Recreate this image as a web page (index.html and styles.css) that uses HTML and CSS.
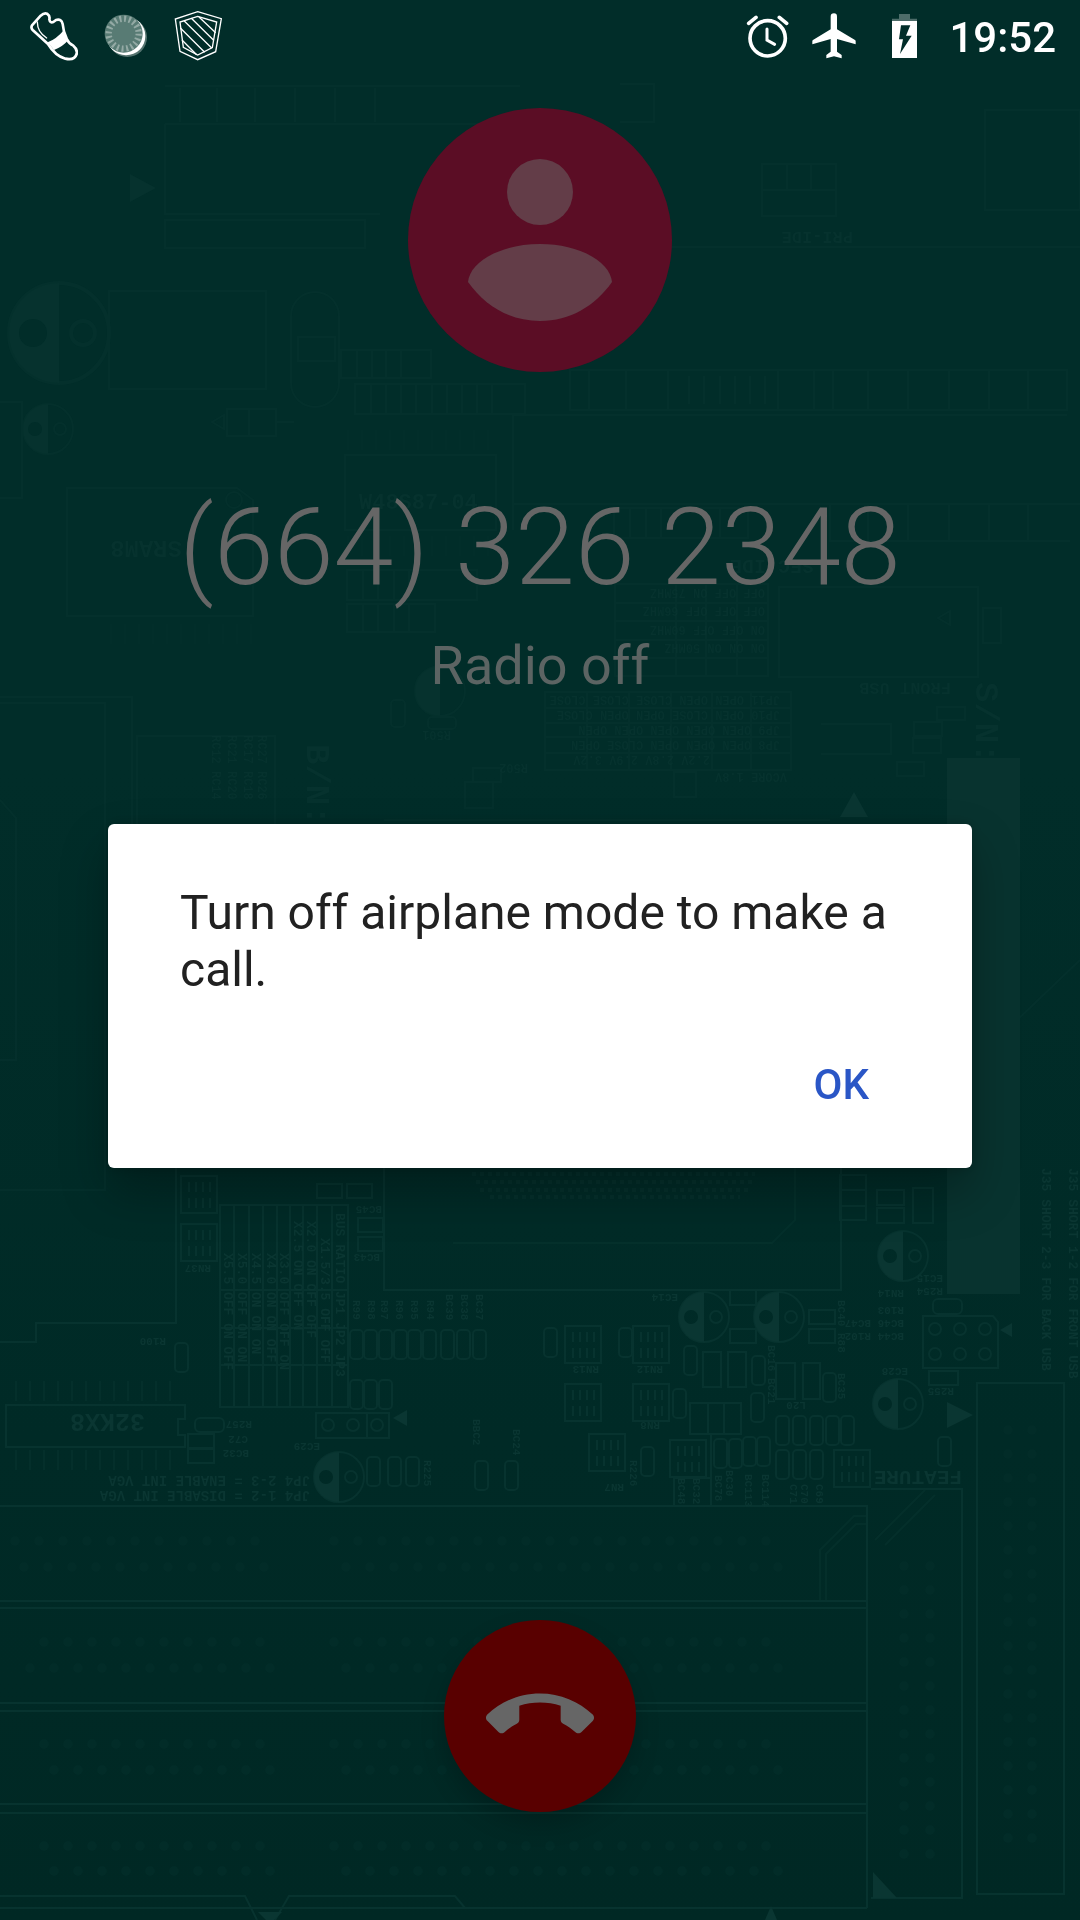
FILE: index.html
```html
<!DOCTYPE html>
<html lang="en">
<head>
<meta charset="utf-8">
<meta name="viewport" content="width=device-width, initial-scale=1">
<title>Call</title>
<link rel="stylesheet" href="styles.css">
</head>
<body>
<svg class="board" viewBox="0 0 1080 1920" preserveAspectRatio="xMidYMid slice" aria-hidden="true">
  <defs>
    <g id="cap">
      <circle r="25"/>
      <path class="solid" d="M0-25A25 25 0 0 0 0 25ZM-20 0a7 7 0 1 1 14 0a7 7 0 1 1-14 0Z" fill-rule="evenodd"/>
      <circle cx="12" r="6"/>
    </g>
    <g id="chip"><rect width="36" height="37"/><path d="M8 6v10M15 6v10M22 6v10M29 6v10M8 22v10M15 22v10M22 22v10M29 22v10"/></g>
    <rect id="res" width="13" height="29" rx="4"/>
  </defs>

  <g class="trace faint">
    <path d="M165 86H520M165 124H540M180 88v34M217 88v34M255 88v34M295 88v34M335 88v34M375 88v34M165 124v90H380"/>
    <path class="solid" d="M130 174v28l26-14z"/>
    <path d="M165 220H365v28H165zM620 84h34v38h-34M762 164h74v52h-74zM787 164v26M811 164v26M762 190h74M985 110h95v100h-95zM670 247H1080"/>
    <use href="#cap" transform="translate(59 333) scale(2)"/>
    <use href="#cap" x="48" y="429"/>
    <path d="M109 291H266V389H109zM227 409h49v27h-49zM249 409v27M276 422h18M212 422l12-7v14z"/>
    <rect x="291" y="292" width="48" height="115" rx="24"/><path d="M298 337h37v24h-37z"/>
    <path d="M341 350h90v28h-90zM357 350v28M372 350v28M386 350v28M401 350v28M355 384h170v30H355zM371 384v30M386 384v30M401 384v30M416 384v30M432 384v30M447 384v30M462 384v30M477 384v30M492 384v30"/>
    <path d="M0 402h22v96H0M67 488h170l16 12v116H67zM345 455h151v75H345z"/>
    <path class="pins" d="M347 440h150M347 546h150M110 634h145"/>
    <circle cx="234" cy="500" r="8"/>
    <path d="M513 415v115M513 504H1080M570 370h497v40H570zM589 371v38M626 371v38M668 371v38M689 376v28M704 376v28M720 376v28M735 376v28M750 376v28M765 376v28M778 371v38M814 371v38M833 371v38M868 371v38M908 371v38M949 371v38M989 371v38M1028 371v38M513 415H1067"/>
    <path d="M614 508h134v30H614zM630 508v30M646 508v30M661 508v30M720 508v30M830 504v37H1070M868 504v37M908 504v37M949 504v37M989 504v37M1028 504v37"/>
    <path d="M347 570h130v30H347zM363 570v30M378 570v30M394 570v30M409 570v30M347 604h88v28h-88zM363 604v28M378 604v28M394 604v28M409 604v28"/>
    <path d="M615 584h153v92H615zM615 603h153M615 621h153M615 640h153M615 658h153M676 584v92M706 584v92M737 584v92M779 587h199v90H779zM938 618l12-7v14zM983 608h18v35h-18z"/>
    <circle cx="440" cy="691" r="25"/><path class="solid" d="M440 666a25 25 0 0 0 0 50z"/><rect x="391" y="700" width="14" height="27" rx="4"/><rect x="428" y="717" width="28" height="12" rx="4"/>
    <path d="M545 692h206v78H545zM545 708h246M545 723h246M545 737h246M545 753h246M587 692v78M629 692v78M671 692v78M712 692v78M748 692h43v78h-43M821 724h70v30h-70"/>
    <path d="M937 707h28v13h-28zM914 722h28v14h-28zM913 738h28v15h-28zM897 762h27v14h-27zM674 772h22v25h-22zM473 768h28v14h-28zM465 782h28v26h-28z"/>
    <path d="M0 697H132V824M0 703H105V1190H0M0 800l16 18V1060H0M137 824V736H275V824M384 820H830M965 1070l115-110"/>
  </g>
  <g class="print faint">
    <text transform="translate(182 541) rotate(180)" font-size="24">SRAM8</text>
    <text x="359" y="509" font-size="22">W48S87-04</text>
    <text transform="translate(853 232) rotate(180)" font-size="17">PRI-IDE</text>
    <text transform="translate(814 560) rotate(180)" font-size="20">SEC-IDE</text>
    <text transform="translate(951 683) rotate(180)" font-size="17">FRONT USB</text>
    <g font-size="12">
      <text transform="translate(765 589) rotate(180)">OFF OFF ON  75MHZ</text>
      <text transform="translate(765 607) rotate(180)">OFF OFF OFF 66MHZ</text>
      <text transform="translate(765 626) rotate(180)">ON  OFF OFF 60MHZ</text>
      <text transform="translate(765 644) rotate(180)">ON  ON  ON  50MHZ</text>
      <text transform="translate(780 696) rotate(180)">JP11 OPEN OPEN CLOSE CLOSE CLOSE</text>
      <text transform="translate(780 711) rotate(180)">JP10 OPEN CLOSE OPEN OPEN CLOSE</text>
      <text transform="translate(780 726) rotate(180)">JP9  OPEN OPEN OPEN OPEN OPEN</text>
      <text transform="translate(780 741) rotate(180)">JP8  OPEN OPEN OPEN CLOSE OPEN</text>
      <text transform="translate(710 756) rotate(180)">2.2V  2.8V  2.9V  3.2V</text>
      <text transform="translate(787 773) rotate(180)">VCORE 1.8V</text>
      <text transform="translate(212 735) rotate(90)">RC12 RC14</text>
      <text transform="translate(228 735) rotate(90)">RC21 RC20</text>
      <text transform="translate(244 735) rotate(90)">RC17 RC18</text>
      <text transform="translate(258 735) rotate(90)">RC27 RC26</text>
      <text transform="translate(528 764) rotate(180)">R502</text>
      <text transform="translate(451 731) rotate(180)">R501</text>
    </g>
    <text transform="translate(307 744) rotate(90)" font-size="34">B/N:</text>
    <text transform="translate(976 682) rotate(90)" font-size="34">S/N:</text>
  </g>
  <path class="slot" d="M947 758h73v536h-73z"/>
  <path class="solid" d="M840 817l14-25 14 25z"/>

  <g class="trace">
    <path d="M0 1342H36V1323H176V1160M384 1160V1290H841V1160"/>
    <path class="dots" d="M472 1174H755M476 1182H752M480 1190H748M490 1197H740"/>
    <path class="faint" d="M453 1243H772L795 1220V1160"/>
    <use href="#chip" x="181" y="1176"/><use href="#chip" x="181" y="1224"/>
    <path d="M220 1205H348V1407H220zM234 1205v202M249 1205v202M263 1205v202M277 1205v202M290 1205v202M303 1205v202M317 1205v202M332 1205v202M220 1290H348M220 1328H348M220 1365H348"/>
    <path d="M317 1184h25v14h-25zM347 1184h25v14h-25zM358 1218h25v14h-25zM358 1237h25v14h-25z"/>
    <use href="#res" x="350" y="1330"/><use href="#res" x="364" y="1330"/><use href="#res" x="379" y="1330"/><use href="#res" x="394" y="1330"/><use href="#res" x="408" y="1330"/><use href="#res" x="423" y="1330"/><use href="#res" x="441" y="1330"/><use href="#res" x="457" y="1330"/><use href="#res" x="473" y="1330"/>
    <use href="#res" x="350" y="1380"/><use href="#res" x="364" y="1380"/><use href="#res" x="379" y="1380"/>
    <use href="#res" x="175" y="1343"/><use href="#res" x="367" y="1457"/><use href="#res" x="388" y="1457"/><use href="#res" x="406" y="1457"/><use href="#res" x="475" y="1461"/><use href="#res" x="505" y="1461"/>
    <path d="M6 1405H185V1419H178V1435H185V1447H6Z"/>
    <path class="pins" d="M15 1391H180M15 1460H180"/>
    <rect x="195" y="1418" width="29" height="14" rx="5"/><path d="M188 1434h26v14h-26zM188 1449h26v14h-26z"/>
    <path d="M316 1413h73v25h-73zM367 1413v25"/><circle cx="328" cy="1425" r="6"/><circle cx="353" cy="1425" r="6"/><circle cx="377" cy="1425" r="6"/>
    <use href="#cap" x="339" y="1477"/><use href="#cap" x="704" y="1317"/><use href="#cap" x="779" y="1317"/><use href="#cap" x="903" y="1256"/><use href="#cap" x="898" y="1404"/>
    <use href="#chip" x="565" y="1326"/><use href="#chip" x="633" y="1326"/><use href="#chip" x="565" y="1384"/><use href="#chip" x="633" y="1384"/><use href="#chip" x="589" y="1434"/><use href="#chip" x="670" y="1440"/><use href="#chip" x="834" y="1450"/>
    <use href="#res" x="544" y="1328"/><use href="#res" x="619" y="1328"/><use href="#res" x="684" y="1346"/><use href="#res" x="673" y="1389"/><use href="#res" x="641" y="1447"/><use href="#res" x="752" y="1356"/><use href="#res" x="751" y="1393"/><use href="#res" x="823" y="1373"/><use href="#res" x="938" y="1437"/>
    <path d="M703 1352h18v35h-18zM728 1352h18v35h-18zM776 1363h19v36h-19zM803 1363h17v36h-17zM690 1403h51v31h-51zM708 1403v31M724 1403v31M730 1290h26v15h-26zM730 1329h26v14h-26zM809 1310h26v14h-26zM809 1329h26v14h-26z"/>
    <use href="#res" x="776" y="1416"/><use href="#res" x="793" y="1416"/><use href="#res" x="810" y="1416"/><use href="#res" x="826" y="1416"/><use href="#res" x="841" y="1416"/>
    <use href="#res" x="776" y="1450"/><use href="#res" x="793" y="1450"/><use href="#res" x="810" y="1450"/><use href="#res" x="714" y="1439"/><use href="#res" x="729" y="1439"/><use href="#res" x="743" y="1437"/><use href="#res" x="757" y="1437"/>
    <path d="M674 1478h37v28h-37zM711 1434v72M840 1175h26v15h-26zM840 1190h26v16h-26zM840 1206h26v14h-26zM877 1190h27v15h-27zM877 1208h27v15h-27zM913 1188h20v35h-20z"/>
    <path d="M923 1316h70l5 6v46h-75z"/><circle cx="935" cy="1329" r="6"/><circle cx="960" cy="1329" r="6"/><circle cx="985" cy="1329" r="6"/><circle cx="935" cy="1354" r="6"/><circle cx="960" cy="1354" r="6"/><circle cx="985" cy="1354" r="6"/>
    <rect x="933" y="1299" width="29" height="15" rx="5"/><path d="M929 1371h29v14h-29zM977 1383h87v511h-87z"/>
    <path d="M0 1506H867V1908M0 1601H867M0 1608H867M0 1703H867M0 1711H867M0 1804H867M0 1813H867M0 1908H867M871 1489h91v409h-91M0 1896H245l12 24M275 1920l14-24H455l10 12"/>
    <path class="faint" d="M820 1600v-50l34-34h12M826 1600v-46l30-30h10M875 1540l50-50M885 1545l50-50"/>
  </g>
  <path class="solid" d="M393 1418l14-8v16zM1000 1330l12-7v14zM947 1402v26l26-13zM873 1872v26h24zM765 1920l6-14 6 14zM258 1912l8 8h8l8-8z"/>
  <path class="pads" d="M15 1541H265M334 1541H770M24 1567H282M346 1567H780M44 1642H265M334 1642H770M30 1668H282M346 1668H780M44 1744H265M334 1744H770M54 1770H282M346 1770H780M44 1846H265M334 1846H770M54 1871H282M346 1871H780M904 1566V1860M930 1566V1860M1008 1430V1860M1032 1430V1860"/>
  <g class="print">
    <text transform="translate(145 1414) rotate(180)" font-size="25">32KX8</text>
    <text transform="translate(310 1476) rotate(180)" font-size="14">JP4 2-3 = ENABLE INT VGA</text>
    <text transform="translate(310 1491) rotate(180)" font-size="14">JP4 1-2 = DISABLE INT VGA</text>
    <text transform="translate(962 1471) rotate(180)" font-size="21">FEATURE</text>
    <text transform="translate(1069 1168) rotate(90)" font-size="13">J35 SHORT 1-2 FOR FRONT USB</text>
    <text transform="translate(1042 1168) rotate(90)" font-size="13">J35 SHORT 2-3 FOR BACK USB</text>
    <g font-size="13">
      <text transform="translate(336 1213) rotate(90)">BUS RATIO JP1    JP2   JP3</text>
      <text transform="translate(321 1238) rotate(90)">X1.5/3.5 OFF   OFF</text>
      <text transform="translate(307 1221) rotate(90)">X2.0     ON    OFF   OFF</text>
      <text transform="translate(294 1221) rotate(90)">X2.5     ON    OFF   ON</text>
      <text transform="translate(280 1253) rotate(90)">X3.0 OFF   OFF   ON</text>
      <text transform="translate(267 1253) rotate(90)">X4.0 ON    ON    OFF</text>
      <text transform="translate(252 1253) rotate(90)">X4.5 ON    ON    ON</text>
      <text transform="translate(238 1253) rotate(90)">X5.0 OFF   ON    ON</text>
      <text transform="translate(224 1253) rotate(90)">X5.5 OFF   ON    OFF</text>
    </g>
    <g font-size="11">
      <text transform="translate(211 1265) rotate(180)">RN37</text><text transform="translate(166 1338) rotate(180)">R100</text><text transform="translate(252 1421) rotate(180)">R257</text><text transform="translate(248 1436) rotate(180)">C72</text><text transform="translate(249 1450) rotate(180)">BC32</text><text transform="translate(320 1443) rotate(180)">EC29</text><text transform="translate(380 1254) rotate(180)">BC43</text><text transform="translate(382 1206) rotate(180)">BC45</text>
      <text transform="translate(353 1300) rotate(90)">R99</text><text transform="translate(368 1300) rotate(90)">R98</text><text transform="translate(381 1300) rotate(90)">R97</text><text transform="translate(396 1300) rotate(90)">R96</text><text transform="translate(411 1300) rotate(90)">R95</text><text transform="translate(427 1300) rotate(90)">R94</text><text transform="translate(446 1294) rotate(90)">BC39</text><text transform="translate(461 1294) rotate(90)">BC38</text><text transform="translate(476 1294) rotate(90)">BC37</text>
      <text transform="translate(473 1419) rotate(90)">BBC2</text><text transform="translate(513 1429) rotate(90)">BC24</text><text transform="translate(424 1460) rotate(90)">R225</text>
      <text transform="translate(678 1294) rotate(180)">EC14</text><text transform="translate(599 1366) rotate(180)">RN13</text><text transform="translate(663 1366) rotate(180)">RN12</text><text transform="translate(660 1422) rotate(180)">RN8</text><text transform="translate(624 1484) rotate(180)">RN7</text><text transform="translate(630 1460) rotate(90)">R226</text>
      <text transform="translate(904 1290) rotate(180)">RN14</text><text transform="translate(904 1307) rotate(180)">R103</text><text transform="translate(904 1320) rotate(180)">BC46 BC47</text><text transform="translate(904 1333) rotate(180)">BC44 R102</text><text transform="translate(943 1275) rotate(180)">EC15</text><text transform="translate(943 1288) rotate(180)">R254</text><text transform="translate(908 1368) rotate(180)">EC28</text><text transform="translate(954 1388) rotate(180)">R255</text><text transform="translate(806 1402) rotate(180)">L20</text>
      <text transform="translate(678 1478) rotate(90)">BC48</text><text transform="translate(693 1478) rotate(90)">BC32</text><text transform="translate(715 1475) rotate(90)">BC78</text><text transform="translate(726 1470) rotate(90)">BC30</text><text transform="translate(745 1474) rotate(90)">BC113</text><text transform="translate(762 1474) rotate(90)">BC114</text><text transform="translate(790 1484) rotate(90)">C71</text><text transform="translate(801 1484) rotate(90)">C70</text><text transform="translate(816 1484) rotate(90)">C69</text><text transform="translate(838 1300) rotate(90)">BC40 R88</text><text transform="translate(838 1373) rotate(90)">BC35</text><text transform="translate(768 1345) rotate(90)">BC16 BC21</text>
    </g>
  </g>
</svg>

<div class="screen">
  <header class="status-bar">
    <div class="notifications">
      <svg class="notice" viewBox="90 0 144 216" role="img" aria-label="Step counter">
        <g fill="none" stroke="#fff" stroke-width="8" stroke-linejoin="round" stroke-linecap="round">
          <path d="M96 76L122 47Q132 38 141 41Q151 48 148 58Q150 70 160 66L168 60Q184 55 188 72Q190 96 200 116Q206 130 220 137Q233 148 230 162Q224 182 196 176Q166 168 144 132L98 90Q92 84 96 76Z"/>
          <path d="M112 66Q112 96 140 114" stroke-width="4"/>
        </g>
        <path d="M143 127Q170 116 190 92L203 122Q190 138 162 150Z" fill="#fff"/>
      </svg>
      <svg class="notice" viewBox="306 0 144 216" role="img" aria-label="Sync">
        <circle cx="382" cy="112" r="59" fill="#a9b9b5" opacity=".5"/>
        <circle cx="378" cy="108" r="58" fill="#fff"/>
        <circle cx="371" cy="101" r="57" fill="#587b74"/>
        <circle cx="371" cy="101" r="45" fill="none" stroke="#94aaa5" stroke-width="19" stroke-dasharray="6 8.137"/>
      </svg>
      <svg class="notice" viewBox="522 0 144 216" role="img" aria-label="Firewall">
        <g fill="none" stroke="#fff" stroke-width="4">
          <path d="M593 35L664 56L647 155L593 179L540 154L526 57Z"/>
          <path d="M593 49L650 66L637 143L593 165L550 142L540 66Z"/>
          <path d="M541 84L614 157M546 120L590 164M552 62L635 144M574 55L641 121M597 51L647 98"/>
        </g>
      </svg>
    </div>
    <div class="system">
      <svg class="indicator" viewBox="75 0 132 216" role="img" aria-label="Alarm set">
        <g fill="none" stroke="#fff" stroke-linecap="round">
          <circle cx="143" cy="115" r="53" stroke-width="11"/>
          <path d="M86 70L108 52M200 70L178 52" stroke-width="11"/>
          <path d="M141 87V120L164 133" stroke-width="9"/>
        </g>
      </svg>
      <svg class="indicator" viewBox="279 0 132 216" role="img" aria-label="Airplane mode">
        <path d="M342 40Q351 40 351 50V88L405 120Q407 121 407 124V133L351 117V155L365 165V175L342 169L319 175V165L332 155V117L277 133V124Q277 121 279 120L332 88V50Q332 40 342 40Z" fill="#fff"/>
      </svg>
      <svg class="indicator" viewBox="483 0 132 216" role="img" aria-label="Battery charging">
        <path d="M537 42h33v14h21v7h-75v-7h21z" fill="#4d6c69"/>
        <path d="M516 63H591V174H516ZM543 76L537 118H549L540 162L575 107H558L571 76Z" fill="#fff" fill-rule="evenodd"/>
      </svg>
      <time class="clock">19:52</time>
    </div>
  </header>

  <main class="call">
    <svg class="avatar" viewBox="0 0 264 264" role="img" aria-label="Contact">
      <circle cx="132" cy="132" r="132" fill="#5b0d25"/>
      <circle cx="132" cy="84" r="33" fill="#633d48"/>
      <path d="M60 174C62 153 94 136 132 136S202 153 204 174C187 198 162 213 132 213S77 198 60 174Z" fill="#633d48"/>
    </svg>
    <h1 class="number">(664) 326 2348</h1>
    <p class="state">Radio off</p>
    <button class="hang-up" type="button" aria-label="End call">
      <svg class="hang-up-icon" viewBox="0 0 24 24" aria-hidden="true"><path fill="#666" d="M12 9c-1.6 0-3.15.25-4.6.72v3.1c0 .39-.23.74-.56.9-.98.49-1.87 1.12-2.66 1.85-.18.18-.43.28-.7.28-.28 0-.53-.11-.71-.29L.29 13.08c-.18-.17-.29-.42-.29-.7 0-.28.11-.53.29-.71C3.34 8.78 7.46 7 12 7s8.66 1.78 11.71 4.67c.18.18.29.43.29.71 0 .28-.11.53-.29.71l-2.48 2.48c-.18.18-.43.29-.71.29-.27 0-.52-.11-.7-.28-.79-.74-1.69-1.36-2.67-1.85-.33-.16-.56-.5-.56-.9v-3.1C15.15 9.25 13.6 9 12 9z"/></svg>
    </button>
  </main>

  <div class="overlay">
    <section class="dialog" role="alertdialog" aria-modal="true" aria-describedby="message">
      <p class="message" id="message">Turn off airplane mode to make a call.</p>
      <button class="confirm" type="button">OK</button>
    </section>
  </div>
</div>
</body>
</html>
```
FILE: styles.css
```css
* {
  box-sizing: border-box;
}

body {
  margin: 0;
  background: #002c28;
  font-family: Roboto, "Liberation Sans", sans-serif;
}

button {
  border: 0;
  font: inherit;
  cursor: pointer;
}

/* Circuit board wallpaper */
.board {
  position: absolute;
  inset: 0;
  width: 100%;
  height: 100%;
  background: linear-gradient(#012d29, #012d29 40%, #002a26 75%, #002824);
}

.trace {
  fill: none;
  stroke: #07332f;
  stroke-width: 2;
}

.faint {
  opacity: .6;
}

.solid {
  fill: #0a3632;
  stroke: none;
}

.slot {
  fill: #08332f;
}

.print {
  fill: #0a3632;
  font-family: "Liberation Mono", monospace;
  font-weight: 700;
  white-space: pre;
}

.pins {
  stroke-width: 20;
  stroke-dasharray: 2 12;
  opacity: .6;
}

.dots {
  stroke-width: 4;
  stroke-dasharray: 4 4;
  opacity: .7;
}

.pads {
  fill: none;
  stroke: #022c28;
  stroke-width: 10;
  stroke-linecap: round;
  stroke-dasharray: 0 24;
}

/* Call screen */
.screen {
  position: relative;
  display: flex;
  flex-direction: column;
  min-height: 100vh;
}

.status-bar {
  display: flex;
  justify-content: space-between;
  height: 72px;
  padding: 0 24px 0 30px;
}

.notifications,
.system {
  display: flex;
  align-items: center;
  gap: 24px;
}

.notice {
  width: 48px;
  height: 72px;
}

.indicator {
  width: 44px;
  height: 72px;
  overflow: visible;
}

.clock {
  padding-top: 4px;
  color: #fff;
  font-size: 42px;
  font-weight: 500;
  line-height: 48px;
}

.call {
  flex: 1;
  display: flex;
  flex-direction: column;
  align-items: center;
  padding: 36px 24px 108px;
}

.avatar {
  width: 264px;
  height: 264px;
}

.number {
  margin: 112px 0 24px;
  color: #666;
  font-size: 108px;
  font-weight: 300;
  line-height: 126px;
}

.state {
  margin: 0;
  color: #5c6463;
  font-size: 54px;
  line-height: 64px;
}

.hang-up {
  display: grid;
  place-items: center;
  width: 192px;
  height: 192px;
  margin-top: auto;
  padding: 0;
  border-radius: 50%;
  background: #590000;
  box-shadow: 0 12px 24px rgba(0, 0, 0, .2);
}

.hang-up-icon {
  width: 108px;
  height: 108px;
}

/* Airplane mode alert */
.overlay {
  position: absolute;
  inset: 72px 0 0;
  display: grid;
  place-items: center;
}

.dialog {
  display: flex;
  flex-direction: column;
  width: 80%;
  padding: 60px 54px 30px 72px;
  border-radius: 6px;
  background: #fff;
  box-shadow: 0 24px 48px rgba(0, 0, 0, .28), 0 0 12px rgba(0, 0, 0, .2);
}

.message {
  margin: 0 18px 32px 0;
  color: #212121;
  font-size: 48px;
  line-height: 57px;
}

.confirm {
  align-self: flex-end;
  height: 108px;
  padding: 0 49px;
  background: transparent;
  color: #2a56c6;
  font-size: 42px;
  font-weight: 500;
}
```
